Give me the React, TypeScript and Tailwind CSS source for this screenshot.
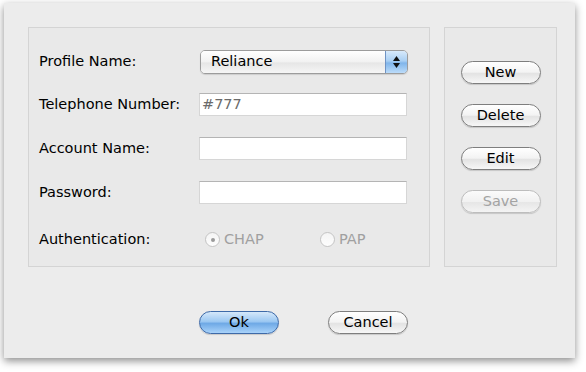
import React from "react";

const font = { fontFamily: '"Lucida Grande", "DejaVu Sans", "Liberation Sans", sans-serif' };

function AquaButton({ label, disabled = false, blue = false }: { label: string; disabled?: boolean; blue?: boolean }) {
  const base =
    "flex h-[23px] w-[80px] shrink-0 items-center justify-center rounded-full border text-[14.5px] leading-none shadow-[0_1px_1px_rgba(0,0,0,0.15)]";
  if (blue) {
    return (
      <div
        className={`${base} border-[#3e6aa8] bg-[linear-gradient(to_bottom,#d5e8fa_0%,#9cc8f2_45%,#6fa9e6_55%,#a9d3fa_100%)] text-black`}
      >
        {label}
      </div>
    );
  }
  return (
    <div
      className={`${base} ${
        disabled
          ? "border-[#bdbdbd] text-[#a3a3a3] bg-[linear-gradient(to_bottom,#fbfbfb_0%,#f1f1f1_50%,#e6e6e6_55%,#f4f4f4_100%)]"
          : "border-[#7e7e7e] text-black bg-[linear-gradient(to_bottom,#ffffff_0%,#f3f3f3_48%,#e3e3e3_55%,#f7f7f7_100%)]"
      }`}
    >
      {label}
    </div>
  );
}

function Field({ value = "" }: { value?: string }) {
  return (
    <div className="flex h-[23px] w-[208px] shrink-0 items-center border border-[#d6d6d6] border-t-[#b4b4b4] bg-white pl-[2px] text-[14.5px] text-[#6a6a6a]">
      {value}
    </div>
  );
}

function Radio({ checked, label }: { checked: boolean; label: string }) {
  return (
    <div className="flex items-center gap-[4px] text-[14.5px] text-[#a0a0a0]">
      <div className="flex h-[15px] w-[15px] items-center justify-center rounded-full border border-[#c4c4c4] bg-[linear-gradient(to_bottom,#f4f4f4,#fdfdfd)]">
        {checked && <div className="h-[4px] w-[4px] rounded-full bg-[#9a9a9a]" />}
      </div>
      <span>{label}</span>
    </div>
  );
}

export default function App() {
  return (
    <div className="h-[372px] w-[586px] bg-white" style={font}>
      <div className="ml-[4px] pt-[3px]">
        <div className="flex h-[355px] w-[571px] flex-col bg-[#ececec] pl-[24px] pr-[18px] pt-[24px] shadow-[0_3px_8px_rgba(0,0,0,0.45)]">
          <div className="flex gap-[14px]">
            <div className="flex h-[240px] w-[402px] shrink-0 flex-col border border-[#d4d4d4] bg-[#e9e9e9] pl-[10px] pt-[22px]">
              <div className="flex h-[23px] items-center">
                <div className="w-[161px] shrink-0 text-[14.5px] text-black">Profile Name:</div>
                <div className="flex h-[24px] w-[208px] shrink-0 overflow-hidden rounded-[5px] border border-[#9c9c9c] shadow-[0_1px_1px_rgba(0,0,0,0.12)]">
                  <div className="flex flex-1 items-center bg-[linear-gradient(to_bottom,#ffffff_0%,#f2f2f2_48%,#e6e6e6_55%,#f6f6f6_100%)] pl-[10px] text-[14.5px] text-black">
                    Reliance
                  </div>
                  <div className="flex w-[22px] flex-col items-center justify-center gap-[2px] border-l border-[#6f93c4] bg-[linear-gradient(to_bottom,#d8eafb_0%,#a9cff3_45%,#80b5ea_55%,#bcdcfa_100%)]">
                    <svg width="7" height="5" viewBox="0 0 7 5"><path d="M3.5 0L7 5H0z" fill="#111" /></svg>
                    <svg width="7" height="5" viewBox="0 0 7 5"><path d="M0 0H7L3.5 5z" fill="#111" /></svg>
                  </div>
                </div>
              </div>
              <div className="mt-[20px] flex h-[23px] items-center">
                <div className="w-[160px] shrink-0 text-[14.5px] text-black">Telephone Number:</div>
                <Field value="#777" />
              </div>
              <div className="mt-[21px] flex h-[23px] items-center">
                <div className="w-[160px] shrink-0 text-[14.5px] text-black">Account Name:</div>
                <Field />
              </div>
              <div className="mt-[21px] flex h-[23px] items-center">
                <div className="w-[160px] shrink-0 text-[14.5px] text-black">Password:</div>
                <Field />
              </div>
              <div className="mt-[24px] flex h-[23px] items-center">
                <div className="w-[166px] shrink-0 text-[14.5px] text-black">Authentication:</div>
                <div className="w-[115px] shrink-0">
                  <Radio checked label="CHAP" />
                </div>
                <Radio checked={false} label="PAP" />
              </div>
            </div>
            <div className="flex h-[240px] w-[113px] shrink-0 flex-col items-center gap-[20px] border border-[#d4d4d4] bg-[#e9e9e9] pt-[33px]">
              <AquaButton label="New" />
              <AquaButton label="Delete" />
              <AquaButton label="Edit" />
              <AquaButton label="Save" disabled />
            </div>
          </div>
          <div className="mt-[44px] flex gap-[49px] pl-[171px]">
            <AquaButton label="Ok" blue />
            <AquaButton label="Cancel" />
          </div>
        </div>
      </div>
    </div>
  );
}
